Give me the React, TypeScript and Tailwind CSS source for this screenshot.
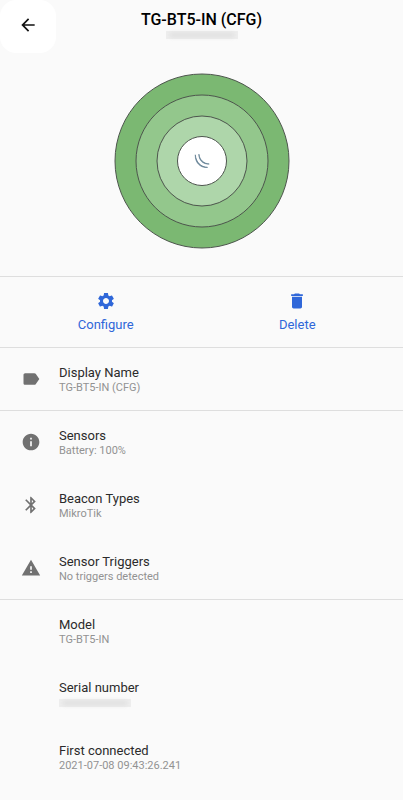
import type { ReactNode } from "react";

const paths = {
  back: "M20 11H7.83l5.59-5.59L12 4l-8 8 8 8 1.41-1.41L7.83 13H20v-2z",
  gear: "M19.14 12.94c.04-.3.06-.61.06-.94 0-.32-.02-.64-.07-.94l2.03-1.58c.18-.14.23-.41.12-.61l-1.92-3.32c-.12-.22-.37-.29-.59-.22l-2.39.96c-.5-.38-1.03-.7-1.62-.94l-.36-2.54c-.04-.24-.24-.41-.48-.41h-3.84c-.24 0-.43.17-.47.41l-.36 2.54c-.59.24-1.13.57-1.62.94l-2.39-.96c-.22-.08-.47 0-.59.22L2.74 8.87c-.12.21-.08.47.12.61l2.03 1.58c-.05.3-.09.63-.09.94s.02.64.07.94l-2.03 1.58c-.18.14-.23.41-.12.61l1.92 3.32c.12.22.37.29.59.22l2.39-.96c.5.38 1.03.7 1.62.94l.36 2.54c.05.24.24.41.48.41h3.84c.24 0 .44-.17.47-.41l.36-2.54c.59-.24 1.13-.56 1.62-.94l2.39.96c.22.08.47 0 .59-.22l1.92-3.32c.12-.22.07-.47-.12-.61l-2.01-1.58zM12 15.6c-1.98 0-3.6-1.62-3.6-3.6s1.62-3.6 3.6-3.6 3.6 1.62 3.6 3.6-1.62 3.6-3.6 3.6z",
  trash: "M6 19c0 1.1.9 2 2 2h8c1.1 0 2-.9 2-2V7H6v12zM19 4h-3.5l-1-1h-5l-1 1H5v2h14V4z",
  label: "M17.63 5.84C17.27 5.33 16.67 5 16 5L5 5.01C3.9 5.01 3 5.9 3 7v10c0 1.1.9 1.99 2 1.99L16 19c.67 0 1.27-.33 1.63-.84L22 12l-4.37-6.16z",
  info: "M12 2C6.48 2 2 6.48 2 12s4.48 10 10 10 10-4.48 10-10S17.52 2 12 2zm1 15h-2v-6h2v6zm0-8h-2V7h2v2z",
  bluetooth: "M17.71 7.71L12 2h-1v7.59L6.41 5 5 6.41 10.59 12 5 17.59 6.41 19 11 14.41V22h1l5.71-5.71-4.3-4.29 4.3-4.29zM13 5.83l1.88 1.88L13 9.59V5.83zm1.88 10.46L13 18.17v-3.76l1.88 1.88z",
  warning: "M1 21h22L12 2 1 21zm12-3h-2v-2h2v2zm0-4h-2v-4h2v4z",
};

function Icon({ name }: { name: keyof typeof paths }) {
  return (
    <svg viewBox="0 0 24 24" fill="currentColor" aria-hidden="true" className="size-5">
      <path d={paths[name]} />
    </svg>
  );
}

function Redacted() {
  return (
    <span className="flex h-2 w-18 items-center justify-center bg-[#eeeeee]">
      <span className="h-1 w-16 bg-[#dddddd] blur-[2px]" />
    </span>
  );
}

function Row({ icon, title, children }: { icon?: keyof typeof paths; title: string; children: ReactNode }) {
  return (
    <li className="flex h-[63px] items-center border-[#dedede]">
      <span className="flex w-[59px] shrink-0 items-center pb-px pl-[21px] text-[#717171]">
        {icon && <Icon name={icon} />}
      </span>
      <div className="pt-px">
        <h2 className="text-[13px] leading-4 text-[#2b2b2b]">{title}</h2>
        <div className="flex h-[14px] items-center text-[11px] leading-[14px] text-[#929292]">{children}</div>
      </div>
    </li>
  );
}

function Action({ icon, label }: { icon: keyof typeof paths; label: string }) {
  return (
    <button className="flex w-1/2 flex-col items-center gap-1 pt-[14px] text-[13px] leading-5 text-[#2f67d9]">
      <Icon name={icon} />
      {label}
    </button>
  );
}

export default function App() {
  return (
    <main className="min-h-screen bg-[#fafafa] font-['Roboto','Liberation_Sans',sans-serif]">
      <header className="grid h-[53px] grid-cols-[56px_1fr_56px]">
        <button aria-label="Back" className="flex items-center justify-center rounded-2xl bg-white pb-1 text-[#111111]">
          <Icon name="back" />
        </button>
        <div className="flex flex-col items-center gap-px pt-[10px]">
          <h1 className="text-base leading-5 font-medium text-black">TG-BT5-IN (CFG)</h1>
          <Redacted />
        </div>
      </header>

      <div className="flex justify-center pt-5 pb-[27px]">
        <svg viewBox="0 0 176 176" className="size-44" role="img" aria-label="Signal range">
          <g stroke="#4d554d" strokeWidth="1">
            <circle cx="88" cy="88" r="87" fill="#7bb872" />
            <circle cx="88" cy="88" r="66" fill="#93c78c" />
            <circle cx="88" cy="88" r="45" fill="#aed6aa" />
            <circle cx="88" cy="88" r="24.5" fill="#ffffff" />
          </g>
          <g fill="#5f7d90" stroke="#5f7d90" strokeWidth=".7" strokeLinejoin="round">
            <path d="M81.3 81.8C81 89.6 86 95 93.6 94.4C87 94 82 89.4 81.3 81.8Z" />
            <path d="M84.9 81.2C84.8 87.2 89 91.5 95.2 91C90 90.6 85.6 87 84.9 81.2Z" />
          </g>
        </svg>
      </div>

      <nav className="flex h-[72px] border-y border-[#dedede] px-[10px]">
        <Action icon="gear" label="Configure" />
        <Action icon="trash" label="Delete" />
      </nav>

      <ul className="*:last:border-b">
        <Row icon="label" title="Display Name">TG-BT5-IN (CFG)</Row>
      </ul>
      <ul className="*:last:border-b">
        <Row icon="info" title="Sensors">Battery: 100%</Row>
        <Row icon="bluetooth" title="Beacon Types">MikroTik</Row>
        <Row icon="warning" title="Sensor Triggers">No triggers detected</Row>
      </ul>
      <ul>
        <Row title="Model">TG-BT5-IN</Row>
        <Row title="Serial number"><Redacted /></Row>
        <Row title="First connected">2021-07-08 09:43:26.241</Row>
      </ul>
    </main>
  );
}
